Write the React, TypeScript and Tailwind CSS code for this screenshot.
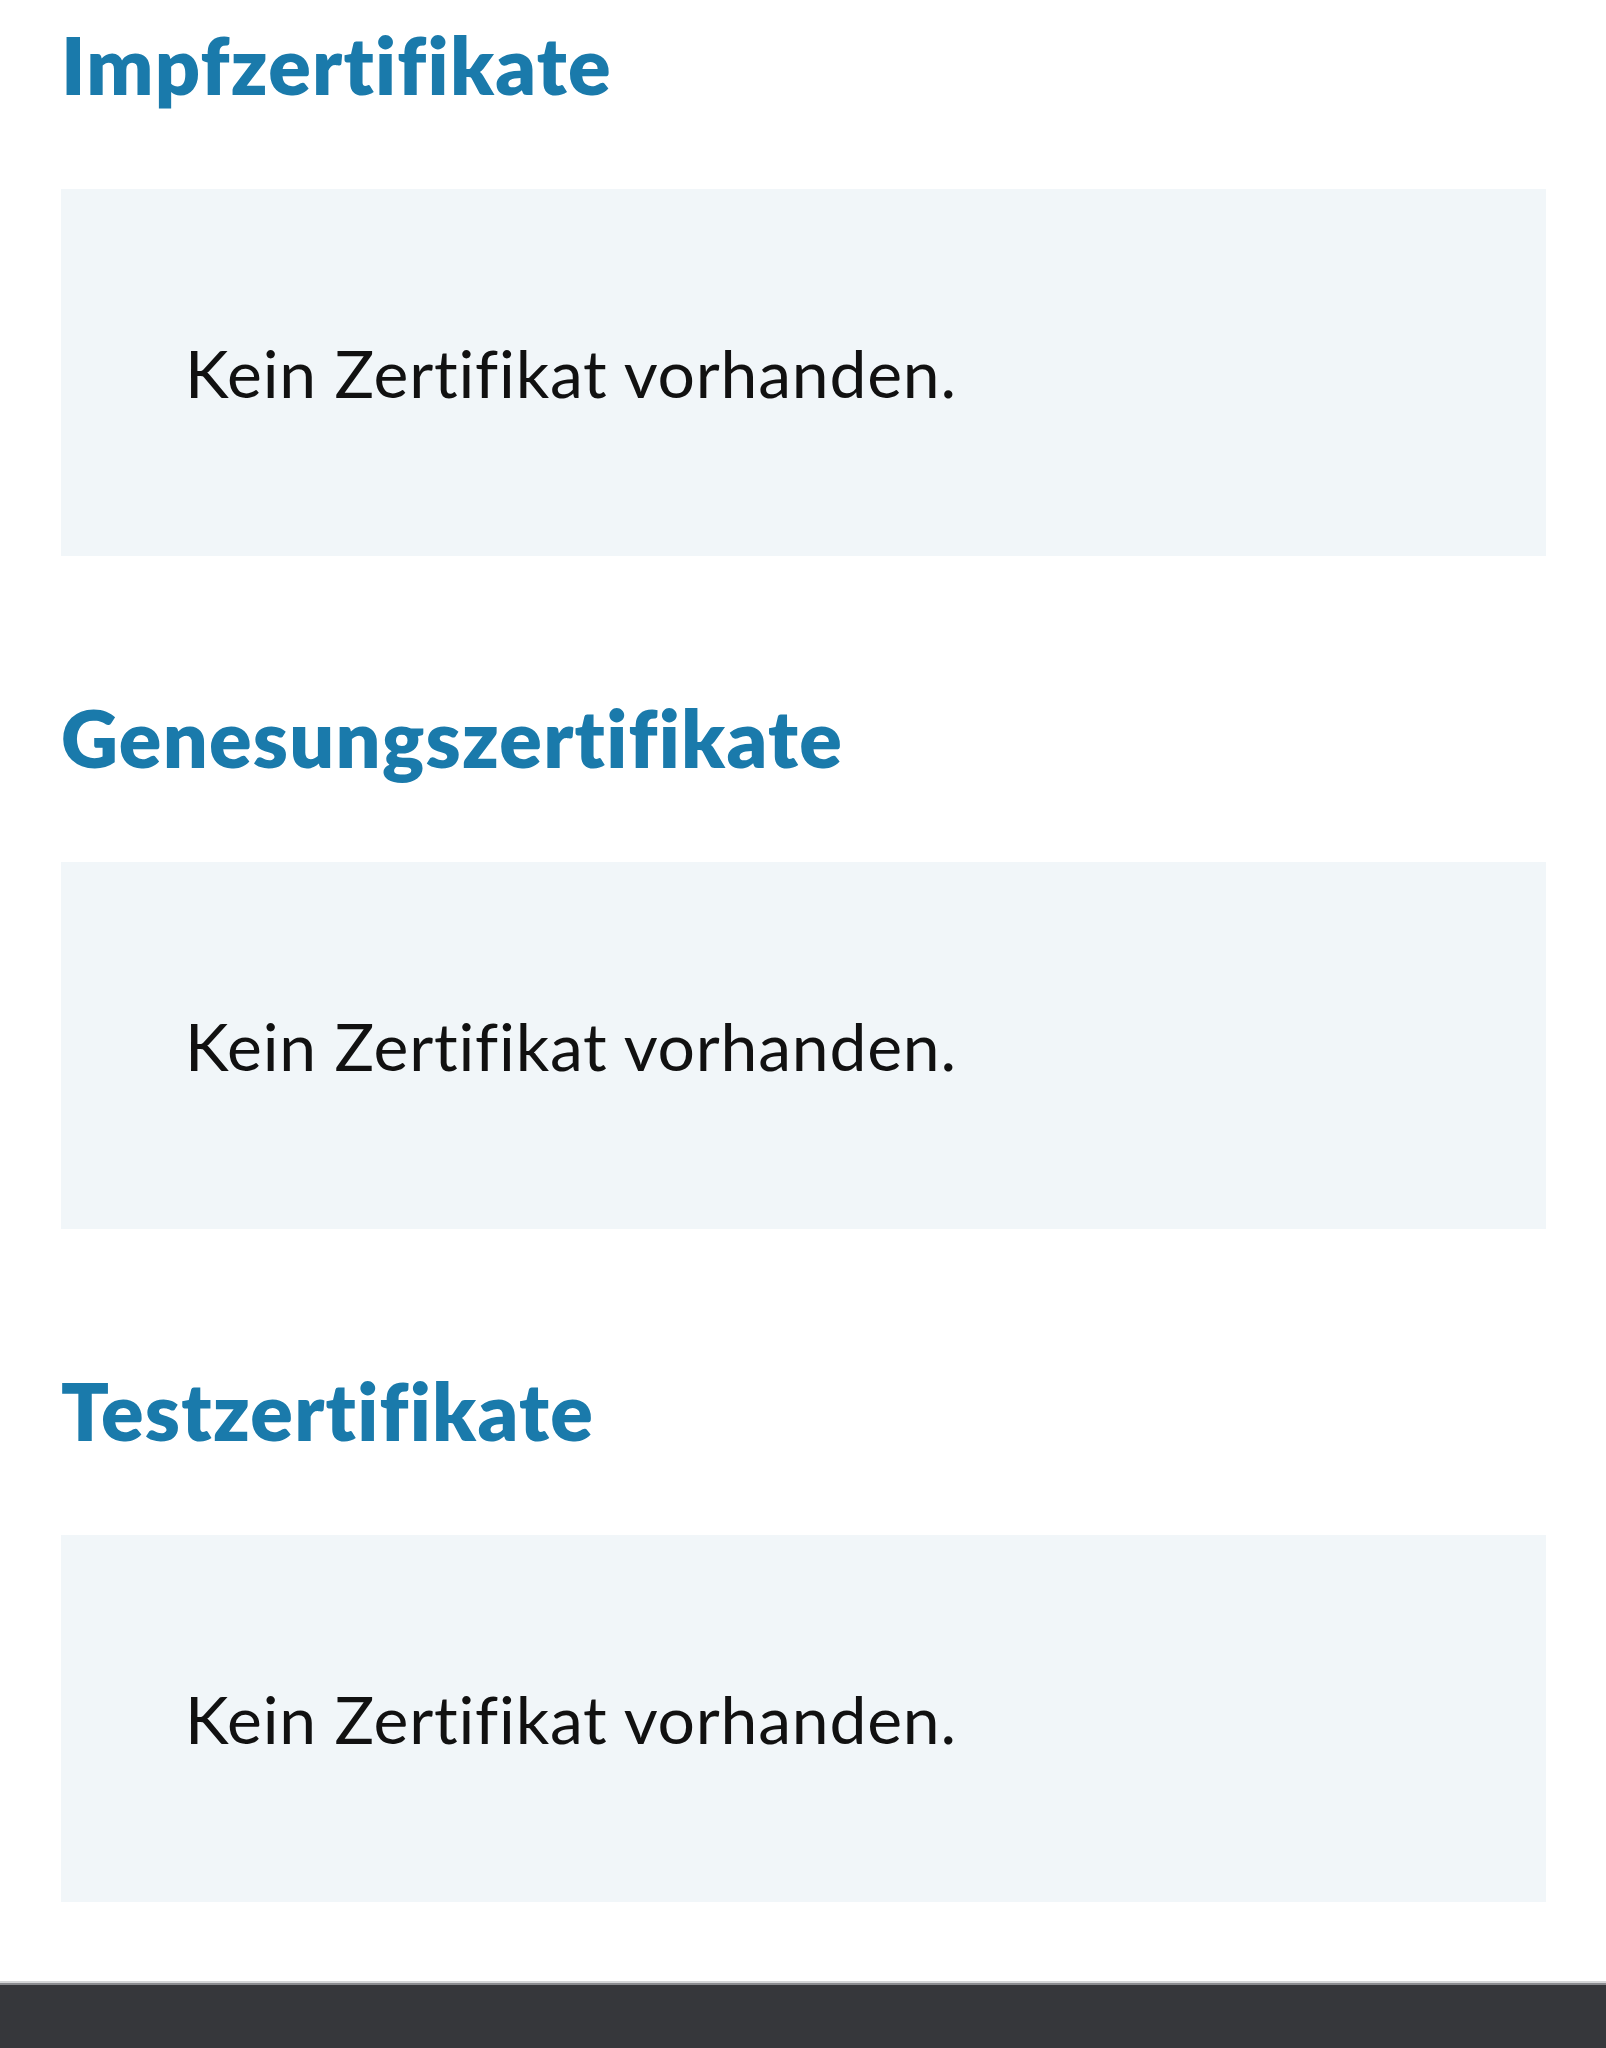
export default function App() {
  const sections = ["Impfzertifikate", "Genesungszertifikate", "Testzertifikate"];
  return (
    <div className="w-[1606px] h-[2048px] bg-white flex flex-col [font-variant-ligatures:none]" style={{ fontFamily: "Lato, 'Noto Sans', sans-serif" }}>
      <div className="flex flex-col gap-[117px] pl-[61px] pr-[60px]">
        {sections.map((s) => (
          <section key={s} className="flex flex-col">
            <div className="h-[189px] pt-[25px]">
              <h2 className="text-[79px] leading-none font-extrabold tracking-[0.016em] text-[#1a7aab]">{s}</h2>
            </div>
            <div className="h-[367px] bg-[#f1f6f9] flex items-center pl-[124px]">
              <p className="text-[66px] leading-none tracking-[0.012em] text-[#111111]">Kein Zertifikat vorhanden.</p>
            </div>
          </section>
        ))}
      </div>
      <div className="mt-auto flex flex-col">
        <div className="h-[2px] bg-[#d4d5d7]" />
        <div className="h-[2px] bg-[#8a8b8f]" />
        <div className="h-[63px] bg-[#36373b]" />
      </div>
    </div>
  );
}
